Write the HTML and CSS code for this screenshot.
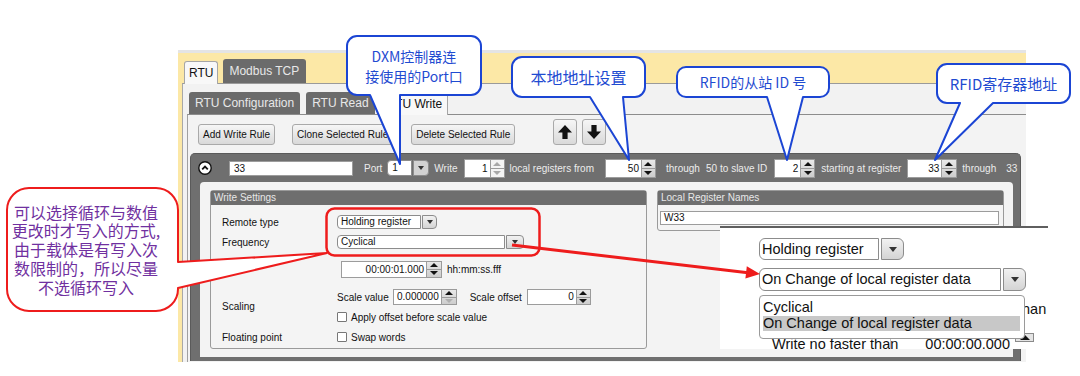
FILE: index.html
```html
<!DOCTYPE html>
<html lang="zh">
<head>
    <meta charset="UTF-8">
    <title>RTU Write</title>
    <link rel="stylesheet" href="styles.css">
</head>
<body>
<div class="page">
    <div class="window">
        <div class="tabs top-tabs">
            <div class="tab active">RTU</div>
            <div class="tab">Modbus TCP</div>
        </div>
        <div class="panel outer">
            <div class="tabs sub-tabs">
                <div class="tab">RTU Configuration</div>
                <div class="tab">RTU Read</div>
                <div class="tab active">RTU Write</div>
            </div>
            <div class="panel inner">
                <div class="toolbar">
                    <button class="btn">Add Write Rule</button>
                    <button class="btn clone">Clone Selected Rule</button>
                    <button class="btn del">Delete Selected Rule</button>
                    <button class="btn arrow up-btn">
                        <svg width="16" height="16" viewBox="0 0 16 16"><path d="M8 1 L15 8.6 H10.6 V15 H5.4 V8.6 H1 Z" fill="#111"/></svg>
                    </button>
                    <button class="btn arrow dn-btn">
                        <svg width="16" height="16" viewBox="0 0 16 16"><path d="M8 15 L15 7.4 H10.6 V1 H5.4 V7.4 H1 Z" fill="#111"/></svg>
                    </button>
                </div>

                <div class="rule">
                    <div class="rule-head">
                        <svg class="toggle" width="14" height="14" viewBox="0 0 14 14"><circle cx="7" cy="7" r="6.2" fill="#fff" stroke="#111" stroke-width="1.4"/><path d="M4.2 8.4 L7 5.6 L9.8 8.4" fill="none" stroke="#111" stroke-width="1.8"/></svg>
                        <div class="field name">33</div>
                        <span class="lbl port">Port</span>
                        <div class="combo port-combo"><div class="val">1</div><div class="drop"></div></div>
                        <span class="lbl m5">Write</span>
                        <div class="spinbox count"><div class="field">1</div><div class="spin off"><i class="up"></i><i class="dn"></i></div></div>
                        <span class="lbl m5">local registers from</span>
                        <div class="spinbox from"><div class="field">50</div><div class="spin"><i class="up"></i><i class="dn"></i></div></div>
                        <span class="lbl m10">through</span>
                        <span class="lbl m6">50</span>
                        <span class="lbl m3">to slave ID</span>
                        <div class="spinbox slave"><div class="field">2</div><div class="spin"><i class="up"></i><i class="dn"></i></div></div>
                        <span class="lbl m6">starting at register</span>
                        <div class="spinbox start"><div class="field">33</div><div class="spin"><i class="up"></i><i class="dn"></i></div></div>
                        <span class="lbl m5">through</span>
                        <span class="lbl m10">33</span>
                    </div>

                    <div class="rule-body">
                        <div class="group ws">
                            <div class="group-title">Write Settings</div>
                            <div class="ws-grid">
                                <div class="cell-l">Remote type</div>
                                <div class="cell-r">
                                    <div class="combo remote"><div class="val">Holding register</div><div class="drop"></div></div>
                                </div>
                                <div class="cell-l">Frequency</div>
                                <div class="cell-r">
                                    <div class="combo freq"><div class="val">Cyclical</div><div class="drop"></div></div>
                                </div>
                                <div class="cell-l"></div>
                                <div class="cell-r time-row">
                                    <div class="spinbox time"><div class="field">00:00:01.000</div><div class="spin"><i class="up"></i><i class="dn"></i></div></div>
                                    <span class="m5">hh:mm:ss.fff</span>
                                </div>
                                <div class="cell-l scaling">Scaling</div>
                                <div class="cell-r">
                                    <span>Scale value</span>
                                    <div class="spinbox scale"><div class="field">0.000000</div><div class="spin half"><i class="up"></i><i class="dn"></i></div></div>
                                    <span class="offset-lbl">Scale offset</span>
                                    <div class="spinbox offset"><div class="field">0</div><div class="spin"><i class="up"></i><i class="dn"></i></div></div>
                                </div>
                                <div class="cell-r">
                                    <span class="check"></span><span>Apply offset before scale value</span>
                                </div>
                                <div class="cell-l">Floating point</div>
                                <div class="cell-r">
                                    <span class="check"></span><span>Swap words</span>
                                </div>
                            </div>
                        </div>
                        <div class="group lr">
                            <div class="group-title">Local Register Names</div>
                            <div class="lr-body">
                                <div class="field names">W33</div>
                            </div>
                        </div>
                    </div>
                </div>
            </div>
        </div>
    </div>

    <!-- magnified view of the frequency drop-down -->
    <div class="zoom-box">
        <div class="combo big first"><div class="val">Holding register</div><div class="drop"></div></div>
        <div class="combo big wide"><div class="val">On Change of local register data</div><div class="drop"></div></div>
        <span class="behind">han</span>
        <div class="list">
            <div class="item">Cyclical</div>
            <div class="item sel">On Change of local register data</div>
        </div>
        <div class="last-row">
            <span class="wnf">Write no faster than</span>
            <span class="sep"></span>
            <span class="tval">00:00:00.000</span>
            <span class="mini-spin"></span>
        </div>
    </div>

    <svg class="marks" width="1080" height="376" viewBox="0 0 1080 376">
        <g fill="#fff" stroke="#1b45d4" stroke-width="2" stroke-linejoin="round">
            <path d="M357,36 H471 A10,10 0 0 1 481,46 V85 A10,10 0 0 1 471,95 H400 L400,164 L370,95 H357 A10,10 0 0 1 347,85 V46 A10,10 0 0 1 357,36 Z"/>
            <path d="M522,57 H635 A10,10 0 0 1 645,67 V87 A10,10 0 0 1 635,97 H623 L629,160 L590,97 H522 A10,10 0 0 1 512,87 V67 A10,10 0 0 1 522,57 Z"/>
            <path d="M686,67 H820 A9,9 0 0 1 829,76 V88 A9,9 0 0 1 820,97 H803 L787,160 L767,97 H686 A9,9 0 0 1 677,88 V76 A9,9 0 0 1 686,67 Z"/>
            <path d="M947,64 H1060 A10,10 0 0 1 1070,74 V93 A10,10 0 0 1 1060,103 H993 L935,160 L960,103 H947 A10,10 0 0 1 937,93 V74 A10,10 0 0 1 947,64 Z"/>
        </g>
        <path d="M29,188 H156 A22,22 0 0 1 178,210 V262 L327,253 L178,288 V289 A22,22 0 0 1 156,311 H29 A22,22 0 0 1 7,289 V210 A22,22 0 0 1 29,188 Z" fill="#fff" stroke="#ee1c1c" stroke-width="2" stroke-linejoin="round"/>
        <rect x="326.5" y="208.5" width="213" height="47" rx="8" fill="none" stroke="#ee1c1c" stroke-width="2.5"/>
        <line x1="512" y1="245" x2="748" y2="272.8" stroke="#ee1c1c" stroke-width="3"/>
        <polygon points="760,274 745.4,278.6 746.8,266.2" fill="#ee1c1c"/>
    </svg>

    <div class="note blue n1">DXM控制器连<br>接使用的Port口</div>
    <div class="note blue n2">本地地址设置</div>
    <div class="note blue n3">RFID的从站 ID 号</div>
    <div class="note blue n4">RFID寄存器地址</div>
    <div class="note purple n5">
        <div>可以选择循环与数值</div>
        <div>更改时才写入的方式,</div>
        <div>由于载体是有写入次</div>
        <div>数限制的，所以尽量</div>
        <div>不选循环写入</div>
    </div>
</div>
</body>
</html>
```

FILE: styles.css
```css
body {
    margin: 0;
    background: #fff;
    font-family: "Liberation Sans", Arial, sans-serif;
    color: #111;
}
.page {
    position: relative;
    width: 1080px;
    height: 376px;
    overflow: hidden;
    padding: 50px 0 0 178px;
    box-sizing: border-box;
}

/* app window */
.window {
    width: 848px;
    height: 312px;
    background: #fce8a6;
    border-top: 3px solid #e4e4e4;
    box-sizing: border-box;
    padding: 6px 0 0 4px;
    overflow: hidden;
    display: flex;
    flex-direction: column;
}
.tabs {
    display: flex;
    align-items: flex-end;
    font-size: 12px;
}
.tab {
    background: #6b6b6b;
    color: #e8e8e8;
    border-radius: 3px 3px 0 0;
    box-sizing: border-box;
}
.tab.active {
    position: relative;
    background: #f8f8f8;
    color: #111;
    border: 1px solid #a6a6a6;
    border-bottom: none;
    margin-bottom: -1px;
}
.top-tabs {
    height: 24px;
    padding-left: 2px;
    gap: 5px;
}
.top-tabs .tab {
    height: 24px;
    line-height: 24px;
    padding: 0 7px 0 6px;
}
.top-tabs .tab.active {
    height: 23px;
    line-height: 22px;
    padding: 0 4px;
}
.panel {
    background: #f2f2f2;
    display: flex;
    flex-direction: column;
    flex: 1;
}
.panel.outer {
    border-top: 1px solid #9a9a9a;
    border-left: 1px solid #a8a8a8;
    padding: 8px 0 0 4px;
}
.sub-tabs {
    height: 22px;
    padding-left: 2px;
    gap: 6px;
}
.sub-tabs .tab {
    height: 22px;
    line-height: 22px;
    padding: 0 6px;
}
.sub-tabs .tab.active {
    height: 23px;
    line-height: 22px;
    padding: 0 5px;
}
.panel.inner {
    background: #f3f3f3;
    border-top: 1px solid #8c8c8c;
    border-left: 1px solid #a0a0a0;
}

/* toolbar */
.toolbar {
    height: 38px;
    box-sizing: border-box;
    display: flex;
    align-items: flex-end;
    padding: 0 0 8px 10px;
}
.btn {
    height: 21px;
    padding: 0 4px;
    font-family: inherit;
    font-size: 10px;
    color: #111;
    border: 1px solid #a9a9a9;
    border-radius: 3px;
    background: linear-gradient(#f6f6f6, #d9d9d9);
    white-space: nowrap;
}
.btn.clone { margin-left: 17px; }
.btn.del { margin-left: 18px; }
.btn.arrow {
    width: 24px;
    height: 26px;
    padding: 0;
    display: flex;
    align-items: center;
    justify-content: center;
}
.up-btn { margin-left: 38px; }
.dn-btn { margin-left: 5px; }

/* rule block */
.rule {
    margin-left: 2px;
    width: 831px;
    height: 208px;
    box-sizing: border-box;
    background: #6f6f6f;
    border: 1px solid #5a5a5a;
    border-bottom: none;
    border-radius: 5px 5px 0 0;
}
.rule-head {
    height: 28px;
    display: flex;
    align-items: center;
    font-size: 10px;
    color: #ececec;
    white-space: nowrap;
}
.toggle { margin-left: 7px; }
.field {
    background: #fff;
    border: 1px solid #9c9c9c;
    box-sizing: border-box;
    color: #111;
    font-size: 10px;
}
.field.name {
    width: 124px;
    height: 15px;
    line-height: 13px;
    padding-left: 4px;
    margin-left: 17px;
}
.lbl.port { margin-left: 11px; }
.m3 { margin-left: 3px; }
.m5 { margin-left: 5px; }
.m6 { margin-left: 6px; }
.m10 { margin-left: 10px; }

.combo {
    display: flex;
    height: 14px;
    font-size: 10px;
    color: #111;
}
.combo .val {
    background: #fff;
    border: 1px solid #8c8c8c;
    border-radius: 4px 0 0 4px;
    padding-left: 3px;
    box-sizing: border-box;
    line-height: 12px;
    white-space: nowrap;
    overflow: hidden;
}
.combo .drop {
    margin-left: 1px;
    border: 1px solid #8c8c8c;
    border-radius: 0 4px 4px 0;
    background: linear-gradient(#f2f2f2, #d4d4d4);
    box-sizing: border-box;
    display: flex;
    align-items: center;
    justify-content: center;
}
.combo .drop::after {
    content: "";
    border-left: 3px solid transparent;
    border-right: 3px solid transparent;
    border-top: 4px solid #333;
}
.port-combo {
    margin-left: 5px;
    height: 16px;
}
.port-combo .val { width: 25px; line-height: 14px; padding-left: 4px; }
.port-combo .drop { width: 16px; background: #d2d2d2; }

.spinbox {
    display: flex;
    height: 19px;
}
.spinbox .field {
    text-align: right;
    padding-right: 2px;
    line-height: 17px;
    white-space: nowrap;
}
.spin {
    width: 14px;
    display: flex;
    flex-direction: column;
    border: 1px solid #9a9a9a;
    border-left: none;
    background: linear-gradient(#e8e8e8, #cdcdcd);
    box-sizing: border-box;
}
.spin i {
    flex: 1;
    display: flex;
    align-items: center;
    justify-content: center;
}
.spin i + i { border-top: 1px solid #9a9a9a; }
.spin i::after {
    content: "";
    border-left: 4px solid transparent;
    border-right: 4px solid transparent;
}
.spin .up::after { border-bottom: 4px solid #111; }
.spin .dn::after { border-top: 4px solid #111; }
.spin.off { background: #f4f4f4; }
.spin.off .up::after { border-bottom-color: #a8a8a8; }
.spin.off .dn::after { border-top-color: #a8a8a8; }
.spin.half .dn::after { border-top-color: #b0b0b0; }

.count { margin-left: 6px; }
.count .field { width: 27px; }
.from { margin-left: 11px; }
.from .field { width: 37px; }
.slave { margin-left: 7px; }
.slave .field { width: 27px; }
.start { margin-left: 6px; }
.start .field { width: 35px; }
.start .spin { width: 15px; }

.rule-body {
    margin: 0 7px 0 9px;
    height: 175px;
    box-sizing: border-box;
    background: #f3f3f3;
    border-radius: 4px 4px 0 0;
    padding: 8px 9px 0 10px;
    display: flex;
    align-items: flex-start;
    gap: 10px;
}

/* group boxes */
.group {
    border: 1px solid #9a9a9a;
    border-radius: 3px;
    background: #f4f4f4;
    font-size: 10px;
    box-sizing: border-box;
}
.group-title {
    height: 14px;
    line-height: 14px;
    background: #6e6e6e;
    color: #e8e8e8;
    padding-left: 3px;
}
.ws { width: 437px; }
.ws-grid {
    display: grid;
    grid-template-columns: 115px 1fr;
    grid-template-rows: 20px 20px 34px 22px 18px 22px;
    padding: 7px 0 0 11px;
}
.cell-l, .cell-r {
    display: flex;
    align-items: center;
    white-space: nowrap;
}
.cell-l.scaling { grid-row: span 2; }
.remote .val { width: 84px; }
.remote .drop { width: 15px; }
.freq .val { width: 168px; }
.freq .drop { width: 18px; }
.time-row { padding-left: 4px; }
.time { height: 17px; }
.time .field { width: 86px; line-height: 15px; }
.time .spin { width: 15px; }
.scale, .offset { height: 16px; }
.scale { margin-left: 4px; }
.scale .field { width: 49px; line-height: 14px; }
.scale .spin { width: 15px; }
.offset-lbl { margin-left: 13px; }
.offset { margin-left: 5px; }
.offset .field { width: 50px; line-height: 14px; }
.check {
    width: 10px;
    height: 10px;
    box-sizing: border-box;
    border: 1px solid #777;
    border-radius: 1px;
    background: #fff;
    margin-right: 4px;
}
.lr { width: 347px; }
.lr-body { padding: 6px 4px 5px 2px; }
.field.names {
    height: 14px;
    line-height: 12px;
    padding-left: 3px;
}

/* magnified drop-down */
.zoom-box {
    position: absolute;
    left: 720px;
    top: 226px;
    width: 328px;
    height: 123px;
    box-sizing: border-box;
    background: #fff;
    border-top: 2px solid #5f5f5f;
    overflow: hidden;
    padding-left: 39px;
    display: flex;
    flex-direction: column;
    font-size: 14.5px;
}
.zoom-box > * { flex-shrink: 0; }
.combo.big {
    height: 23px;
    font-size: 14.5px;
}
.combo.big .val {
    border-radius: 6px 0 0 6px;
    line-height: 21px;
    padding-left: 2px;
}
.combo.big .drop {
    width: 23px;
    margin-left: 2px;
    border-radius: 0 6px 6px 0;
}
.combo.big .drop::after {
    border-left-width: 4px;
    border-right-width: 4px;
    border-top-width: 5px;
}
.combo.big.first { margin-top: 10px; height: 22px; }
.combo.big.first .val { width: 120px; }
.combo.big.wide { margin-top: 8px; }
.combo.big.wide .val { width: 242px; }
.behind {
    position: absolute;
    left: 302px;
    top: 73px;
    z-index: 1;
}
.list {
    position: relative;
    z-index: 2;
    margin-top: 4px;
    width: 266px;
    height: 44px;
    box-sizing: border-box;
    border: 1px solid #9a9a9a;
    border-radius: 4px;
    background: #fff;
    padding: 4px 4px 0 3px;
}
.item {
    height: 16px;
    line-height: 15px;
    white-space: nowrap;
}
.item.sel {
    background: #c8c8c8;
    height: 15px;
}
.last-row {
    display: flex;
    align-items: flex-start;
    margin-top: -3px;
    height: 16px;
    line-height: 16px;
    white-space: nowrap;
}
.wnf {
    width: 118px;
    padding-left: 13px;
}
.sep {
    width: 1px;
    height: 16px;
    background: #bdbdbd;
}
.tval {
    width: 119px;
    text-align: right;
}
.mini-spin {
    width: 19px;
    height: 9px;
    margin: -3px 0 0 5px;
    box-sizing: border-box;
    border: 1px solid #8a8a8a;
    background: #e4e4e4;
    display: flex;
    align-items: center;
    justify-content: center;
}
.mini-spin::after {
    content: "";
    border-left: 5px solid transparent;
    border-right: 5px solid transparent;
    border-bottom: 5px solid #111;
}

/* annotations */
.marks {
    position: absolute;
    left: 0;
    top: 0;
    z-index: 5;
}
.note {
    position: absolute;
    z-index: 6;
    box-sizing: border-box;
    display: flex;
    flex-direction: column;
    align-items: center;
    justify-content: center;
    text-align: center;
    font-family: "Noto Sans CJK SC", sans-serif;
    white-space: nowrap;
}
.blue { color: #1f4bd1; }
.purple { color: #7030a0; }
.n1 { left: 347px; top: 36px; width: 134px; height: 59px; font-size: 14px; line-height: 20px; }
.n2 { left: 512px; top: 57px; width: 133px; height: 40px; font-size: 16px; }
.n3 { left: 677px; top: 67px; width: 152px; height: 30px; font-size: 14px; }
.n4 { left: 937px; top: 64px; width: 133px; height: 39px; font-size: 15px; }
.n5 {
    left: 7px;
    top: 188px;
    width: 171px;
    height: 123px;
    padding-right: 13px;
    font-size: 16px;
    line-height: 18.7px;
}
```
